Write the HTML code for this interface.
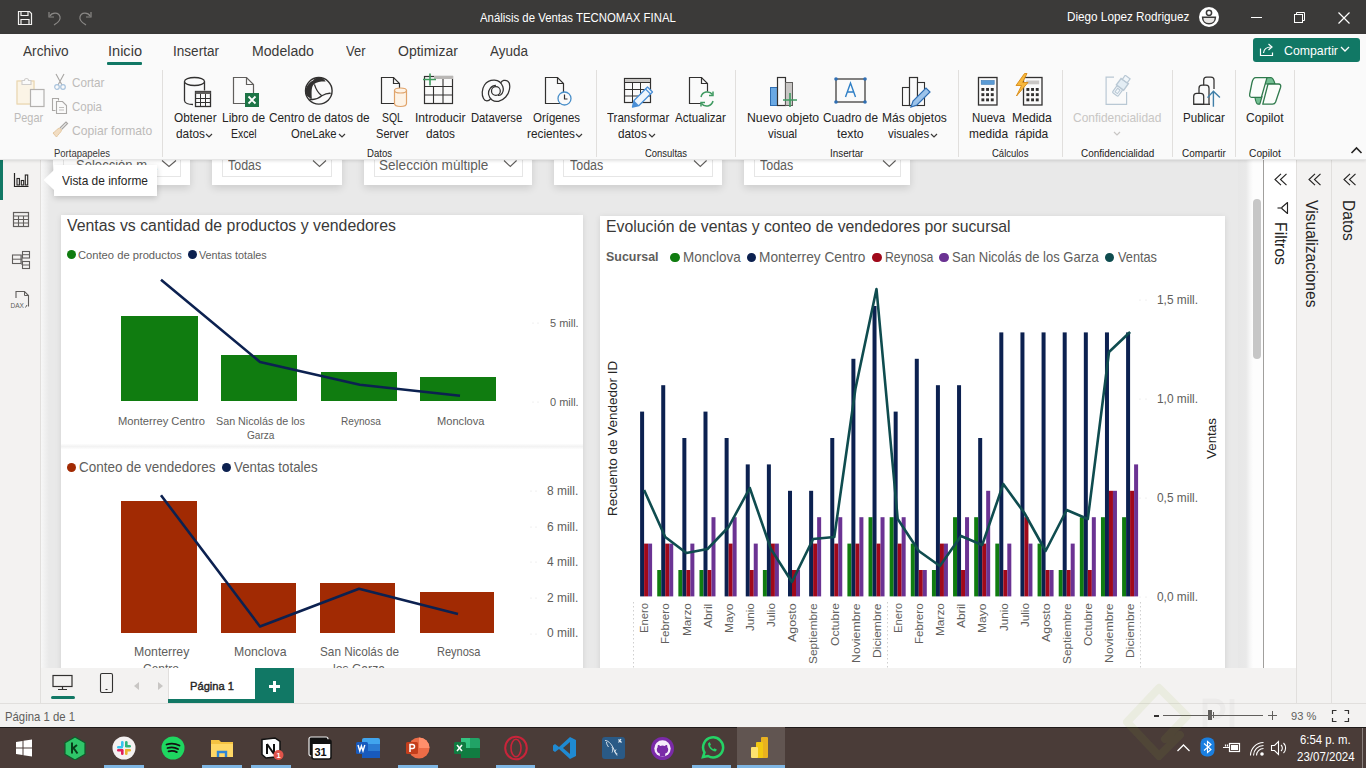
<!DOCTYPE html>
<html><head><meta charset="utf-8"><title>Power BI</title>
<style>
html,body{margin:0;padding:0;width:1366px;height:768px;overflow:hidden;background:#f9f9f9;}
body{position:relative;font-family:"Liberation Sans",sans-serif;}
.t{position:absolute;white-space:nowrap;}
.r{position:absolute;display:block;}
</style></head><body>
<div class="r" style="left:0px;top:0px;width:1366px;height:34px;background:#3b3a39;"></div><svg class="r" style="left:17px;top:10px;" width="16" height="16" viewBox="0 0 16 16"><path d="M1.5 1.5h11l2 2v11h-13z" fill="none" stroke="#f3f2f1" stroke-width="1.2"/><path d="M4 1.5v4h7v-4" fill="none" stroke="#f3f2f1" stroke-width="1.2"/><path d="M4 14.5v-5h8v5" fill="none" stroke="#f3f2f1" stroke-width="1.2"/></svg><svg class="r" style="left:47px;top:10px;" width="16" height="16" viewBox="0 0 16 16"><path d="M3 6 C5 2, 12 2, 13 7 C14 11, 10 13, 7 15" fill="none" stroke="#8a8886" stroke-width="1.2"/><path d="M2 2v5h5" fill="none" stroke="#8a8886" stroke-width="1.2"/></svg><svg class="r" style="left:77px;top:10px;" width="16" height="16" viewBox="0 0 16 16"><path d="M13 6 C11 2, 4 2, 3 7 C2 11, 6 13, 9 15" fill="none" stroke="#8a8886" stroke-width="1.2"/><path d="M14 2v5h-5" fill="none" stroke="#8a8886" stroke-width="1.2"/></svg><div class="t" style="left:480.0px;top:11.5px;font-size:12.07px;line-height:12.07px;color:#ffffff;transform-origin:0 50%;transform:scaleX(0.9434);">Análisis de Ventas TECNOMAX FINAL</div><div class="t" style="left:1066.5px;top:11.3px;font-size:12.43px;line-height:12.43px;color:#ffffff;transform-origin:0 50%;transform:scaleX(0.9434);">Diego Lopez Rodriguez</div><svg class="r" style="left:1198px;top:6px;" width="22" height="22" viewBox="0 0 22 22"><circle cx="11" cy="11" r="10" fill="#ffffff"/><circle cx="11" cy="6.8" r="2.6" fill="none" stroke="#3b3a39" stroke-width="1.5"/><path d="M4.6 11.2H17.4C17.4 15.2 14.6 17.8 11 17.8C7.4 17.8 4.6 15.2 4.6 11.2Z" fill="#e8e6e4" stroke="#3b3a39" stroke-width="1.5"/></svg><div class="r" style="left:1251px;top:17px;width:11px;height:1px;background:#ffffff;"></div><svg class="r" style="left:1293px;top:11px;" width="14" height="14" viewBox="0 0 14 14"><rect x="1.5" y="3.5" width="8" height="8" fill="none" stroke="#fff" stroke-width="1"/><path d="M3.5 3.5v-2h8v8h-2" fill="none" stroke="#fff" stroke-width="1"/></svg><svg class="r" style="left:1337px;top:11px;" width="14" height="14" viewBox="0 0 14 14"><path d="M1.5 1.5l11 11M12.5 1.5l-11 11" stroke="#fff" stroke-width="1.2"/></svg>
<div class="r" style="left:0px;top:160px;width:40px;height:508px;background:#f3f2f1;"></div><div class="r" style="left:40px;top:160px;width:1px;height:508px;background:#e1dfdd;"></div><div class="r" style="left:0px;top:160px;width:3px;height:40px;background:#117865;"></div><svg class="r" style="left:12px;top:171px;" width="18" height="18" viewBox="0 0 18 18"><path d="M2.5 2v13.5h14" fill="none" stroke="#252423" stroke-width="1.2"/><rect x="5" y="7.5" width="2.4" height="6.5" fill="none" stroke="#252423" stroke-width="1.1"/><rect x="9.3" y="9.5" width="2.4" height="4.5" fill="none" stroke="#252423" stroke-width="1.1"/><rect x="13.3" y="4" width="2.4" height="10" fill="none" stroke="#252423" stroke-width="1.1"/></svg><svg class="r" style="left:12px;top:211px;" width="18" height="18" viewBox="0 0 18 18"><rect x="1.5" y="1.5" width="15" height="14" fill="none" stroke="#605e5c" stroke-width="1.2"/><path d="M1.5 5h15M1.5 8.5h15M1.5 12h15M6.5 5v10.5M11.5 5v10.5" stroke="#605e5c" stroke-width="1.1"/></svg><svg class="r" style="left:11px;top:249px;" width="21" height="22" viewBox="0 0 21 22"><rect x="1.5" y="6" width="8.5" height="8.5" fill="none" stroke="#605e5c" stroke-width="1.1"/><path d="M1.5 10.2h8.5" stroke="#605e5c" stroke-width="1"/><rect x="11.5" y="2.5" width="7" height="6.5" fill="none" stroke="#605e5c" stroke-width="1.1"/><path d="M11.5 5.7h7" stroke="#605e5c" stroke-width="1"/><rect x="11.5" y="12.5" width="7" height="7" fill="none" stroke="#605e5c" stroke-width="1.1"/><path d="M11.5 16h7M10 10.2h1M11 5.7v10.3" stroke="#605e5c" stroke-width="1"/></svg><svg class="r" style="left:9px;top:290px;" width="22" height="20" viewBox="0 0 22 20"><path d="M7 8v-6.5h8.5l4 4v11" fill="none" stroke="#605e5c" stroke-width="1.1"/><path d="M15.5 1.5v4h4" fill="none" stroke="#605e5c" stroke-width="1"/><text x="1.5" y="17.5" font-family="Liberation Sans" font-size="6.5" fill="#605e5c">DAX</text><path d="M16.5 17.5l1.5-2.5" stroke="#605e5c" stroke-width="1"/></svg>
<div class="r" style="left:41px;top:160px;width:1222px;height:508px;background:#e9e9e9;"></div><div class="r" style="left:41px;top:160px;width:8px;height:508px;background:linear-gradient(to right,#f7f7f7,#e9e9e9);"></div><div class="r" style="left:1238px;top:160px;width:25px;height:508px;background:linear-gradient(to right,#e7e7e7 0px,#e9e9e9 8px,#f6f6f6 12px,#fdfdfd 15px,#fdfdfd);"></div><div class="r" style="left:1253px;top:199px;width:8px;height:160px;background:#c6c6c6;border-radius:4px"></div>
<div class="r" style="left:61px;top:215px;width:522px;height:470px;background:#ffffff;box-shadow:0 1px 6px rgba(0,0,0,0.10)"></div><div class="t" style="left:66.9px;top:218.4px;font-size:16.82px;line-height:16.82px;color:#3a3938;transform-origin:0 50%;transform:scaleX(0.9434);">Ventas vs cantidad de productos y vendedores</div><div class="r" style="left:66.5px;top:250.20000000000002px;width:9.2px;height:9.2px;background:#107c10;border-radius:50%"></div><div class="t" style="left:77.9px;top:249.0px;font-size:11.70px;line-height:11.70px;color:#605e5c;transform-origin:0 50%;transform:scaleX(0.9566);">Conteo de productos</div><div class="r" style="left:187.70000000000002px;top:250.20000000000002px;width:9.2px;height:9.2px;background:#0c2150;border-radius:50%"></div><div class="t" style="left:199.2px;top:249.0px;font-size:11.70px;line-height:11.70px;color:#605e5c;transform-origin:0 50%;transform:scaleX(0.9225);">Ventas totales</div><div class="r" style="left:121px;top:316px;width:77px;height:85px;background:#107c10;"></div><div class="r" style="left:221px;top:355px;width:76px;height:46px;background:#107c10;"></div><div class="r" style="left:321px;top:372px;width:76px;height:29px;background:#107c10;"></div><div class="r" style="left:420px;top:377px;width:76px;height:24px;background:#107c10;"></div><svg class="r" style="left:61px;top:215px;" width="522" height="450" viewBox="0 0 522 450"><polyline points="100.0,64.8 199.0,147.0 298.8,169.7 399.0,180.8" fill="none" stroke="#0c2150" stroke-width="2.6" stroke-linejoin="round"/></svg><div class="t" style="left:549.6px;top:317.3px;font-size:11.70px;line-height:11.70px;color:#605e5c;transform-origin:0 50%;transform:scaleX(0.9394);">5 mill.</div><div class="t" style="left:549.6px;top:396.1px;font-size:11.70px;line-height:11.70px;color:#605e5c;transform-origin:0 50%;transform:scaleX(0.9394);">0 mill.</div><svg class="r" style="left:532px;top:322.2px;" width="12" height="2" viewBox="0 0 12 2"><circle cx="1" cy="1" r="0.6" fill="#ddd"/><circle cx="6" cy="1" r="0.6" fill="#ddd"/></svg><svg class="r" style="left:532px;top:401px;" width="12" height="2" viewBox="0 0 12 2"><circle cx="1" cy="1" r="0.6" fill="#ddd"/><circle cx="6" cy="1" r="0.6" fill="#ddd"/></svg><div class="t" style="left:117.9px;top:414.6px;font-size:11.60px;line-height:11.60px;color:#605e5c;transform-origin:0 50%;transform:scaleX(0.9629);">Monterrey Centro</div><div class="t" style="left:216.3px;top:414.6px;font-size:11.60px;line-height:11.60px;color:#605e5c;transform-origin:0 50%;transform:scaleX(0.9264);">San Nicolás de los</div><div class="t" style="left:247.0px;top:429.0px;font-size:11.60px;line-height:11.60px;color:#605e5c;transform-origin:0 50%;transform:scaleX(0.8706);">Garza</div><div class="t" style="left:340.5px;top:414.6px;font-size:11.60px;line-height:11.60px;color:#605e5c;transform-origin:0 50%;transform:scaleX(0.8694);">Reynosa</div><div class="t" style="left:436.5px;top:414.6px;font-size:11.60px;line-height:11.60px;color:#605e5c;transform-origin:0 50%;transform:scaleX(0.9568);">Monclova</div><div class="r" style="left:61px;top:444px;width:522px;height:5px;background:linear-gradient(to bottom,#fcfcfc,#f3f3f3 50%,#fcfcfc);"></div><div class="r" style="left:67.0px;top:462.9px;width:9.2px;height:9.2px;background:#a12a03;border-radius:50%"></div><div class="t" style="left:79.0px;top:460.4px;font-size:14.20px;line-height:14.20px;color:#605e5c;transform-origin:0 50%;transform:scaleX(0.9501);">Conteo de vendedores</div><div class="r" style="left:221.9px;top:462.9px;width:9.2px;height:9.2px;background:#0c2150;border-radius:50%"></div><div class="t" style="left:234.0px;top:460.4px;font-size:14.20px;line-height:14.20px;color:#605e5c;transform-origin:0 50%;transform:scaleX(0.9372);">Ventas totales</div><div class="r" style="left:121px;top:501px;width:76px;height:132px;background:#a12a03;"></div><div class="r" style="left:221px;top:583px;width:75px;height:50px;background:#a12a03;"></div><div class="r" style="left:320px;top:583px;width:75px;height:50px;background:#a12a03;"></div><div class="r" style="left:420px;top:592px;width:74px;height:41px;background:#a12a03;"></div><svg class="r" style="left:61px;top:215px;" width="522" height="450" viewBox="0 0 522 450"><polyline points="100.0,280.3 199.0,411.5 298.0,373.8 397.0,399.0" fill="none" stroke="#0c2150" stroke-width="2.6" stroke-linejoin="round"/></svg><div class="t" style="left:547.0px;top:484.8px;font-size:12.70px;line-height:12.70px;color:#605e5c;transform-origin:0 50%;transform:scaleX(0.9438);">8 mill.</div><svg class="r" style="left:530px;top:490.2px;" width="12" height="2" viewBox="0 0 12 2"><circle cx="1" cy="1" r="0.6" fill="#ddd"/><circle cx="6" cy="1" r="0.6" fill="#ddd"/></svg><div class="t" style="left:547.0px;top:520.6px;font-size:12.70px;line-height:12.70px;color:#605e5c;transform-origin:0 50%;transform:scaleX(0.9438);">6 mill.</div><svg class="r" style="left:530px;top:526px;" width="12" height="2" viewBox="0 0 12 2"><circle cx="1" cy="1" r="0.6" fill="#ddd"/><circle cx="6" cy="1" r="0.6" fill="#ddd"/></svg><div class="t" style="left:547.0px;top:555.9px;font-size:12.70px;line-height:12.70px;color:#605e5c;transform-origin:0 50%;transform:scaleX(0.9438);">4 mill.</div><svg class="r" style="left:530px;top:561.2px;" width="12" height="2" viewBox="0 0 12 2"><circle cx="1" cy="1" r="0.6" fill="#ddd"/><circle cx="6" cy="1" r="0.6" fill="#ddd"/></svg><div class="t" style="left:547.0px;top:591.5px;font-size:12.70px;line-height:12.70px;color:#605e5c;transform-origin:0 50%;transform:scaleX(0.9438);">2 mill.</div><svg class="r" style="left:530px;top:596.9px;" width="12" height="2" viewBox="0 0 12 2"><circle cx="1" cy="1" r="0.6" fill="#ddd"/><circle cx="6" cy="1" r="0.6" fill="#ddd"/></svg><div class="t" style="left:547.0px;top:627.1px;font-size:12.70px;line-height:12.70px;color:#605e5c;transform-origin:0 50%;transform:scaleX(0.9438);">0 mill.</div><svg class="r" style="left:530px;top:632.5px;" width="12" height="2" viewBox="0 0 12 2"><circle cx="1" cy="1" r="0.6" fill="#ddd"/><circle cx="6" cy="1" r="0.6" fill="#ddd"/></svg><div class="t" style="left:133.5px;top:645.9px;font-size:12.90px;line-height:12.90px;color:#605e5c;transform-origin:0 50%;transform:scaleX(0.9524);">Monterrey</div><div class="t" style="left:143.0px;top:663.0px;font-size:12.90px;line-height:12.90px;color:#605e5c;transform-origin:0 50%;transform:scaleX(0.9298);">Centro</div><div class="t" style="left:233.5px;top:645.9px;font-size:12.90px;line-height:12.90px;color:#605e5c;transform-origin:0 50%;transform:scaleX(0.9510);">Monclova</div><div class="t" style="left:319.6px;top:645.9px;font-size:12.90px;line-height:12.90px;color:#605e5c;transform-origin:0 50%;transform:scaleX(0.9128);">San Nicolás de</div><div class="t" style="left:333.0px;top:663.0px;font-size:12.90px;line-height:12.90px;color:#605e5c;transform-origin:0 50%;transform:scaleX(0.9420);">los Garza</div><div class="t" style="left:436.5px;top:645.9px;font-size:12.90px;line-height:12.90px;color:#605e5c;transform-origin:0 50%;transform:scaleX(0.8544);">Reynosa</div>
<div class="r" style="left:600px;top:216px;width:625px;height:470px;background:#ffffff;box-shadow:0 1px 6px rgba(0,0,0,0.10)"></div><div class="t" style="left:605.6px;top:219.4px;font-size:16.74px;line-height:16.74px;color:#3a3938;transform-origin:0 50%;transform:scaleX(0.9434);">Evolución de ventas y conteo de vendedores por sucursal</div><div class="t" style="left:605.6px;top:250.4px;font-size:13.18px;line-height:13.18px;color:#605e5c;font-weight:bold;transform-origin:0 50%;transform:scaleX(0.9434);">Sucursal</div><div class="r" style="left:670.4px;top:252.6px;width:9.2px;height:9.2px;background:#107c10;border-radius:50%"></div><div class="t" style="left:682.8px;top:250.1px;font-size:14.10px;line-height:14.10px;color:#605e5c;transform-origin:0 50%;transform:scaleX(0.9562);">Monclova</div><div class="r" style="left:746.9px;top:252.6px;width:9.2px;height:9.2px;background:#0c2150;border-radius:50%"></div><div class="t" style="left:759.3px;top:250.1px;font-size:14.10px;line-height:14.10px;color:#605e5c;transform-origin:0 50%;transform:scaleX(0.9708);">Monterrey Centro</div><div class="r" style="left:872.4px;top:252.6px;width:9.2px;height:9.2px;background:#a0091a;border-radius:50%"></div><div class="t" style="left:885.0px;top:250.1px;font-size:14.10px;line-height:14.10px;color:#605e5c;transform-origin:0 50%;transform:scaleX(0.8698);">Reynosa</div><div class="r" style="left:939.4px;top:252.6px;width:9.2px;height:9.2px;background:#6b3393;border-radius:50%"></div><div class="t" style="left:952.4px;top:250.1px;font-size:14.10px;line-height:14.10px;color:#605e5c;transform-origin:0 50%;transform:scaleX(0.9228);">San Nicolás de los Garza</div><div class="r" style="left:1105.3000000000002px;top:252.6px;width:9.2px;height:9.2px;background:#0f4c4f;border-radius:50%"></div><div class="t" style="left:1118.0px;top:250.1px;font-size:14.10px;line-height:14.10px;color:#605e5c;transform-origin:0 50%;transform:scaleX(0.9045);">Ventas</div><svg class="r" style="left:600px;top:216px;" width="625" height="470" viewBox="0 0 625 470"><rect x="40.10" y="195.60" width="4" height="184.80" fill="#0c2150"/><rect x="44.10" y="327.60" width="4" height="52.80" fill="#a0091a"/><rect x="48.10" y="327.60" width="4" height="52.80" fill="#6b3393"/><rect x="57.23" y="354.00" width="4" height="26.40" fill="#107c10"/><rect x="61.23" y="169.20" width="4" height="211.20" fill="#0c2150"/><rect x="65.23" y="327.60" width="4" height="52.80" fill="#a0091a"/><rect x="69.23" y="327.60" width="4" height="52.80" fill="#6b3393"/><rect x="78.36" y="354.00" width="4" height="26.40" fill="#107c10"/><rect x="82.36" y="222.00" width="4" height="158.40" fill="#0c2150"/><rect x="86.36" y="354.00" width="4" height="26.40" fill="#a0091a"/><rect x="90.36" y="327.60" width="4" height="52.80" fill="#6b3393"/><rect x="99.49" y="354.00" width="4" height="26.40" fill="#107c10"/><rect x="103.49" y="195.60" width="4" height="184.80" fill="#0c2150"/><rect x="107.49" y="354.00" width="4" height="26.40" fill="#a0091a"/><rect x="111.49" y="301.20" width="4" height="79.20" fill="#6b3393"/><rect x="124.62" y="222.00" width="4" height="158.40" fill="#0c2150"/><rect x="128.62" y="327.60" width="4" height="52.80" fill="#a0091a"/><rect x="132.62" y="301.20" width="4" height="79.20" fill="#6b3393"/><rect x="145.75" y="248.40" width="4" height="132.00" fill="#0c2150"/><rect x="149.75" y="354.00" width="4" height="26.40" fill="#a0091a"/><rect x="153.75" y="327.60" width="4" height="52.80" fill="#6b3393"/><rect x="162.88" y="354.00" width="4" height="26.40" fill="#107c10"/><rect x="166.88" y="248.40" width="4" height="132.00" fill="#0c2150"/><rect x="170.88" y="327.60" width="4" height="52.80" fill="#a0091a"/><rect x="174.88" y="327.60" width="4" height="52.80" fill="#6b3393"/><rect x="188.01" y="274.80" width="4" height="105.60" fill="#0c2150"/><rect x="192.01" y="354.00" width="4" height="26.40" fill="#a0091a"/><rect x="196.01" y="354.00" width="4" height="26.40" fill="#6b3393"/><rect x="209.14" y="274.80" width="4" height="105.60" fill="#0c2150"/><rect x="213.14" y="327.60" width="4" height="52.80" fill="#a0091a"/><rect x="217.14" y="301.20" width="4" height="79.20" fill="#6b3393"/><rect x="230.27" y="222.00" width="4" height="158.40" fill="#0c2150"/><rect x="234.27" y="327.60" width="4" height="52.80" fill="#a0091a"/><rect x="238.27" y="301.20" width="4" height="79.20" fill="#6b3393"/><rect x="247.40" y="327.60" width="4" height="52.80" fill="#107c10"/><rect x="251.40" y="142.80" width="4" height="237.60" fill="#0c2150"/><rect x="255.40" y="327.60" width="4" height="52.80" fill="#a0091a"/><rect x="259.40" y="301.20" width="4" height="79.20" fill="#6b3393"/><rect x="268.53" y="301.20" width="4" height="79.20" fill="#107c10"/><rect x="272.53" y="90.00" width="4" height="290.40" fill="#0c2150"/><rect x="276.53" y="327.60" width="4" height="52.80" fill="#a0091a"/><rect x="280.53" y="301.20" width="4" height="79.20" fill="#6b3393"/><rect x="289.66" y="301.20" width="4" height="79.20" fill="#107c10"/><rect x="293.66" y="195.60" width="4" height="184.80" fill="#0c2150"/><rect x="297.66" y="327.60" width="4" height="52.80" fill="#a0091a"/><rect x="301.66" y="301.20" width="4" height="79.20" fill="#6b3393"/><rect x="310.79" y="327.60" width="4" height="52.80" fill="#107c10"/><rect x="314.79" y="142.80" width="4" height="237.60" fill="#0c2150"/><rect x="318.79" y="354.00" width="4" height="26.40" fill="#a0091a"/><rect x="322.79" y="354.00" width="4" height="26.40" fill="#6b3393"/><rect x="331.92" y="354.00" width="4" height="26.40" fill="#107c10"/><rect x="335.92" y="169.20" width="4" height="211.20" fill="#0c2150"/><rect x="339.92" y="327.60" width="4" height="52.80" fill="#a0091a"/><rect x="343.92" y="327.60" width="4" height="52.80" fill="#6b3393"/><rect x="353.05" y="301.20" width="4" height="79.20" fill="#107c10"/><rect x="357.05" y="169.20" width="4" height="211.20" fill="#0c2150"/><rect x="361.05" y="354.00" width="4" height="26.40" fill="#a0091a"/><rect x="365.05" y="301.20" width="4" height="79.20" fill="#6b3393"/><rect x="374.18" y="301.20" width="4" height="79.20" fill="#107c10"/><rect x="378.18" y="222.00" width="4" height="158.40" fill="#0c2150"/><rect x="382.18" y="327.60" width="4" height="52.80" fill="#a0091a"/><rect x="386.18" y="274.80" width="4" height="105.60" fill="#6b3393"/><rect x="395.31" y="327.60" width="4" height="52.80" fill="#107c10"/><rect x="399.31" y="116.40" width="4" height="264.00" fill="#0c2150"/><rect x="403.31" y="354.00" width="4" height="26.40" fill="#a0091a"/><rect x="407.31" y="327.60" width="4" height="52.80" fill="#6b3393"/><rect x="420.44" y="116.40" width="4" height="264.00" fill="#0c2150"/><rect x="424.44" y="301.20" width="4" height="79.20" fill="#a0091a"/><rect x="428.44" y="327.60" width="4" height="52.80" fill="#6b3393"/><rect x="437.57" y="327.60" width="4" height="52.80" fill="#107c10"/><rect x="441.57" y="116.40" width="4" height="264.00" fill="#0c2150"/><rect x="445.57" y="354.00" width="4" height="26.40" fill="#a0091a"/><rect x="449.57" y="354.00" width="4" height="26.40" fill="#6b3393"/><rect x="458.70" y="354.00" width="4" height="26.40" fill="#107c10"/><rect x="462.70" y="116.40" width="4" height="264.00" fill="#0c2150"/><rect x="466.70" y="354.00" width="4" height="26.40" fill="#a0091a"/><rect x="470.70" y="327.60" width="4" height="52.80" fill="#6b3393"/><rect x="479.83" y="301.20" width="4" height="79.20" fill="#107c10"/><rect x="483.83" y="116.40" width="4" height="264.00" fill="#0c2150"/><rect x="487.83" y="354.00" width="4" height="26.40" fill="#a0091a"/><rect x="491.83" y="301.20" width="4" height="79.20" fill="#6b3393"/><rect x="500.96" y="301.20" width="4" height="79.20" fill="#107c10"/><rect x="504.96" y="116.40" width="4" height="264.00" fill="#0c2150"/><rect x="508.96" y="274.80" width="4" height="105.60" fill="#a0091a"/><rect x="512.96" y="274.80" width="4" height="105.60" fill="#6b3393"/><rect x="522.09" y="301.20" width="4" height="79.20" fill="#107c10"/><rect x="526.09" y="116.40" width="4" height="264.00" fill="#0c2150"/><rect x="530.09" y="274.80" width="4" height="105.60" fill="#a0091a"/><rect x="534.09" y="248.40" width="4" height="132.00" fill="#6b3393"/><polyline points="44.1,274.0 65.2,321.0 86.4,337.0 107.5,333.0 128.6,311.0 149.8,272.0 170.9,333.0 192.0,366.0 213.1,323.0 234.3,321.0 255.4,173.0 276.5,73.0 297.7,303.0 318.8,335.0 339.9,350.0 361.0,320.0 382.2,329.0 403.3,268.0 424.4,297.0 445.6,335.0 466.7,294.0 487.8,303.0 509.0,136.0 530.1,116.0" fill="none" stroke="#0f4c4f" stroke-width="2.6" stroke-linejoin="round"/><line x1="33.5" y1="386" x2="33.5" y2="470" stroke="#cfcfcf" stroke-width="1" stroke-dasharray="1.5,2.5"/><line x1="287.5" y1="386" x2="287.5" y2="470" stroke="#cfcfcf" stroke-width="1" stroke-dasharray="1.5,2.5"/><line x1="540.5" y1="386" x2="540.5" y2="470" stroke="#cfcfcf" stroke-width="1" stroke-dasharray="1.5,2.5"/></svg><div class="t" style="left:638.3px;top:633.4px;font-size:11.60px;line-height:11.60px;color:#605e5c;transform-origin:0 0;transform:rotate(-90deg) scaleX(0.9725)">Enero</div><div class="t" style="left:659.4px;top:643.9px;font-size:11.60px;line-height:11.60px;color:#605e5c;transform-origin:0 0;transform:rotate(-90deg)">Febrero</div><div class="t" style="left:680.6px;top:636.2px;font-size:11.60px;line-height:11.60px;color:#605e5c;transform-origin:0 0;transform:rotate(-90deg) scaleX(1.0209)">Marzo</div><div class="t" style="left:701.7px;top:627.6px;font-size:11.60px;line-height:11.60px;color:#605e5c;transform-origin:0 0;transform:rotate(-90deg) scaleX(1.0472)">Abril</div><div class="t" style="left:722.8px;top:632.8px;font-size:11.60px;line-height:11.60px;color:#605e5c;transform-origin:0 0;transform:rotate(-90deg) scaleX(1.0401)">Mayo</div><div class="t" style="left:744.0px;top:631.1px;font-size:11.60px;line-height:11.60px;color:#605e5c;transform-origin:0 0;transform:rotate(-90deg)">Junio</div><div class="t" style="left:765.1px;top:627.1px;font-size:11.60px;line-height:11.60px;color:#605e5c;transform-origin:0 0;transform:rotate(-90deg)">Julio</div><div class="t" style="left:786.2px;top:641.9px;font-size:11.60px;line-height:11.60px;color:#605e5c;transform-origin:0 0;transform:rotate(-90deg) scaleX(1.0689)">Agosto</div><div class="t" style="left:807.3px;top:664.0px;font-size:11.60px;line-height:11.60px;color:#605e5c;transform-origin:0 0;transform:rotate(-90deg) scaleX(1.0233)">Septiembre</div><div class="t" style="left:828.5px;top:646.2px;font-size:11.60px;line-height:11.60px;color:#605e5c;transform-origin:0 0;transform:rotate(-90deg) scaleX(1.0398)">Octubre</div><div class="t" style="left:849.6px;top:662.8px;font-size:11.60px;line-height:11.60px;color:#605e5c;transform-origin:0 0;transform:rotate(-90deg) scaleX(1.0609)">Noviembre</div><div class="t" style="left:870.7px;top:657.7px;font-size:11.60px;line-height:11.60px;color:#605e5c;transform-origin:0 0;transform:rotate(-90deg) scaleX(1.0420)">Diciembre</div><div class="t" style="left:891.9px;top:633.4px;font-size:11.60px;line-height:11.60px;color:#605e5c;transform-origin:0 0;transform:rotate(-90deg) scaleX(0.9725)">Enero</div><div class="t" style="left:913.0px;top:643.9px;font-size:11.60px;line-height:11.60px;color:#605e5c;transform-origin:0 0;transform:rotate(-90deg)">Febrero</div><div class="t" style="left:934.1px;top:636.2px;font-size:11.60px;line-height:11.60px;color:#605e5c;transform-origin:0 0;transform:rotate(-90deg) scaleX(1.0209)">Marzo</div><div class="t" style="left:955.2px;top:627.6px;font-size:11.60px;line-height:11.60px;color:#605e5c;transform-origin:0 0;transform:rotate(-90deg) scaleX(1.0472)">Abril</div><div class="t" style="left:976.4px;top:632.8px;font-size:11.60px;line-height:11.60px;color:#605e5c;transform-origin:0 0;transform:rotate(-90deg) scaleX(1.0401)">Mayo</div><div class="t" style="left:997.5px;top:631.1px;font-size:11.60px;line-height:11.60px;color:#605e5c;transform-origin:0 0;transform:rotate(-90deg)">Junio</div><div class="t" style="left:1018.6px;top:627.1px;font-size:11.60px;line-height:11.60px;color:#605e5c;transform-origin:0 0;transform:rotate(-90deg)">Julio</div><div class="t" style="left:1039.8px;top:641.9px;font-size:11.60px;line-height:11.60px;color:#605e5c;transform-origin:0 0;transform:rotate(-90deg) scaleX(1.0689)">Agosto</div><div class="t" style="left:1060.9px;top:664.0px;font-size:11.60px;line-height:11.60px;color:#605e5c;transform-origin:0 0;transform:rotate(-90deg) scaleX(1.0233)">Septiembre</div><div class="t" style="left:1082.0px;top:646.2px;font-size:11.60px;line-height:11.60px;color:#605e5c;transform-origin:0 0;transform:rotate(-90deg) scaleX(1.0398)">Octubre</div><div class="t" style="left:1103.2px;top:662.8px;font-size:11.60px;line-height:11.60px;color:#605e5c;transform-origin:0 0;transform:rotate(-90deg) scaleX(1.0609)">Noviembre</div><div class="t" style="left:1124.3px;top:657.7px;font-size:11.60px;line-height:11.60px;color:#605e5c;transform-origin:0 0;transform:rotate(-90deg) scaleX(1.0420)">Diciembre</div><div class="t" style="left:1157.0px;top:293.5px;font-size:12.60px;line-height:12.60px;color:#605e5c;transform-origin:0 50%;transform:scaleX(0.9445);">1,5 mill.</div><svg class="r" style="left:1138px;top:298.8px;" width="14" height="2" viewBox="0 0 14 2"><circle cx="2" cy="1" r="0.6" fill="#ddd"/><circle cx="8" cy="1" r="0.6" fill="#ddd"/></svg><div class="t" style="left:1157.0px;top:392.7px;font-size:12.60px;line-height:12.60px;color:#605e5c;transform-origin:0 50%;transform:scaleX(0.9445);">1,0 mill.</div><svg class="r" style="left:1138px;top:398px;" width="14" height="2" viewBox="0 0 14 2"><circle cx="2" cy="1" r="0.6" fill="#ddd"/><circle cx="8" cy="1" r="0.6" fill="#ddd"/></svg><div class="t" style="left:1157.0px;top:491.5px;font-size:12.60px;line-height:12.60px;color:#605e5c;transform-origin:0 50%;transform:scaleX(0.9445);">0,5 mill.</div><svg class="r" style="left:1138px;top:496.8px;" width="14" height="2" viewBox="0 0 14 2"><circle cx="2" cy="1" r="0.6" fill="#ddd"/><circle cx="8" cy="1" r="0.6" fill="#ddd"/></svg><div class="t" style="left:1157.0px;top:590.7px;font-size:12.60px;line-height:12.60px;color:#605e5c;transform-origin:0 50%;transform:scaleX(0.9445);">0,0 mill.</div><svg class="r" style="left:1138px;top:596px;" width="14" height="2" viewBox="0 0 14 2"><circle cx="2" cy="1" r="0.6" fill="#ddd"/><circle cx="8" cy="1" r="0.6" fill="#ddd"/></svg><div class="t" style="left:605.9px;top:515.8px;font-size:13.51px;line-height:13.51px;color:#252423;transform-origin:0 0;transform:rotate(-90deg)">Recuento de Vendedor ID</div><div class="t" style="left:1205.0px;top:458.6px;font-size:13.41px;line-height:13.41px;color:#252423;transform-origin:0 0;transform:rotate(-90deg)">Ventas</div>
<div class="r" style="left:53px;top:150px;width:137px;height:35px;background:#ffffff;box-shadow:0 3px 8px rgba(0,0,0,0.13)"></div><div class="r" style="left:212px;top:150px;width:129.60000000000002px;height:35px;background:#ffffff;box-shadow:0 3px 8px rgba(0,0,0,0.13)"></div><div class="r" style="left:364.3px;top:150px;width:167.49999999999994px;height:35px;background:#ffffff;box-shadow:0 3px 8px rgba(0,0,0,0.13)"></div><div class="r" style="left:553.7px;top:150px;width:168.29999999999995px;height:35px;background:#ffffff;box-shadow:0 3px 8px rgba(0,0,0,0.13)"></div><div class="r" style="left:744.3px;top:150px;width:166.20000000000005px;height:35px;background:#ffffff;box-shadow:0 3px 8px rgba(0,0,0,0.13)"></div><div class="r" style="left:63px;top:150px;width:117.5px;height:27px;background:#ffffff;border:1px solid #e6e6e6;box-sizing:border-box"></div><div class="t" style="left:76.0px;top:158.6px;font-size:13.80px;line-height:13.80px;color:#605e5c;transform-origin:0 50%;transform:scaleX(0.9462);">Selección m...</div><svg class="r" style="left:161px;top:159px;" width="16" height="9" viewBox="0 0 16 9"><polyline points="1,1.5 8.0,7.5 15,1.5" fill="none" stroke="#605e5c" stroke-width="1.1"/></svg><div class="r" style="left:221.5px;top:150px;width:110.10000000000002px;height:27px;background:#ffffff;border:1px solid #e6e6e6;box-sizing:border-box"></div><div class="t" style="left:228.0px;top:158.6px;font-size:13.80px;line-height:13.80px;color:#605e5c;transform-origin:0 50%;transform:scaleX(0.9043);">Todas</div><svg class="r" style="left:312px;top:159px;" width="15" height="9" viewBox="0 0 15 9"><polyline points="1,1.5 7.5,7.5 14,1.5" fill="none" stroke="#605e5c" stroke-width="1.1"/></svg><div class="r" style="left:374px;top:150px;width:148.5px;height:27px;background:#ffffff;border:1px solid #e6e6e6;box-sizing:border-box"></div><div class="t" style="left:379.4px;top:158.6px;font-size:13.80px;line-height:13.80px;color:#605e5c;transform-origin:0 50%;transform:scaleX(0.9837);">Selección múltiple</div><svg class="r" style="left:503.4px;top:159px;" width="14.600000000000023" height="9" viewBox="0 0 14.600000000000023 9"><polyline points="1,1.5 7.300000000000011,7.5 13.600000000000023,1.5" fill="none" stroke="#605e5c" stroke-width="1.1"/></svg><div class="r" style="left:563.3px;top:150px;width:149.4000000000001px;height:27px;background:#ffffff;border:1px solid #e6e6e6;box-sizing:border-box"></div><div class="t" style="left:569.6px;top:158.6px;font-size:13.80px;line-height:13.80px;color:#605e5c;transform-origin:0 50%;transform:scaleX(0.9043);">Todas</div><svg class="r" style="left:692.8px;top:159px;" width="14.600000000000023" height="9" viewBox="0 0 14.600000000000023 9"><polyline points="1,1.5 7.300000000000011,7.5 13.600000000000023,1.5" fill="none" stroke="#605e5c" stroke-width="1.1"/></svg><div class="r" style="left:753.6px;top:150px;width:147.69999999999993px;height:27px;background:#ffffff;border:1px solid #e6e6e6;box-sizing:border-box"></div><div class="t" style="left:759.9px;top:158.6px;font-size:13.80px;line-height:13.80px;color:#605e5c;transform-origin:0 50%;transform:scaleX(0.9043);">Todas</div><svg class="r" style="left:882.2px;top:159px;" width="14.599999999999909" height="9" viewBox="0 0 14.599999999999909 9"><polyline points="1,1.5 7.2999999999999545,7.5 13.599999999999909,1.5" fill="none" stroke="#605e5c" stroke-width="1.1"/></svg>
<div class="r" style="left:53.5px;top:164.5px;width:103px;height:31px;background:#ffffff;box-shadow:0 2px 6px rgba(0,0,0,0.18)"></div><svg class="r" style="left:42px;top:170px;" width="13" height="20" viewBox="0 0 13 20"><path d="M12 0 L1.5 10 L12 20 Z" fill="#ffffff"/></svg><div class="t" style="left:62.0px;top:174.9px;font-size:12.60px;line-height:12.60px;color:#252423;transform-origin:0 50%;transform:scaleX(0.9470);">Vista de informe</div>
<div class="r" style="left:1263px;top:160px;width:1px;height:508px;background:#a19f9d;"></div><div class="r" style="left:1264px;top:160px;width:32px;height:508px;background:#ffffff;"></div><div class="r" style="left:1296px;top:160px;width:1px;height:508px;background:#e1dfdd;"></div><div class="r" style="left:1297px;top:160px;width:35px;height:508px;background:#f3f2f1;"></div><div class="r" style="left:1331px;top:160px;width:1px;height:508px;background:#e1dfdd;"></div><div class="r" style="left:1332px;top:160px;width:34px;height:508px;background:#f3f2f1;"></div><svg class="r" style="left:1273.5px;top:172.5px;" width="14" height="13" viewBox="0 0 14 13"><polyline points="7,0.8 1,6.5 7,12.2" fill="none" stroke="#252423" stroke-width="1.15"/><polyline points="12.5,0.8 6.5,6.5 12.5,12.2" fill="none" stroke="#252423" stroke-width="1.15"/></svg><svg class="r" style="left:1308px;top:172.5px;" width="14" height="13" viewBox="0 0 14 13"><polyline points="7,0.8 1,6.5 7,12.2" fill="none" stroke="#252423" stroke-width="1.15"/><polyline points="12.5,0.8 6.5,6.5 12.5,12.2" fill="none" stroke="#252423" stroke-width="1.15"/></svg><svg class="r" style="left:1342.5px;top:172.5px;" width="14" height="13" viewBox="0 0 14 13"><polyline points="7,0.8 1,6.5 7,12.2" fill="none" stroke="#252423" stroke-width="1.15"/><polyline points="12.5,0.8 6.5,6.5 12.5,12.2" fill="none" stroke="#252423" stroke-width="1.15"/></svg><svg class="r" style="left:1276px;top:201px;" width="13" height="14" viewBox="0 0 13 14"><path d="M11.5 1.5V12.5L6 7.8V6.2Z" fill="none" stroke="#252423" stroke-width="1.15" stroke-linejoin="round"/><path d="M6 7H1.5" stroke="#252423" stroke-width="1.15"/></svg><div class="t" style="left:1280.0px;top:222.0px;font-size:15.80px;line-height:15.80px;color:#252423;transform-origin:0 0;transform:rotate(90deg) translate(0,-7.90px)">Filtros</div><div class="t" style="left:1311.4px;top:200.0px;font-size:15.65px;line-height:15.65px;color:#252423;transform-origin:0 0;transform:rotate(90deg) translate(0,-7.83px)">Visualizaciones</div><div class="t" style="left:1347.5px;top:200.0px;font-size:15.58px;line-height:15.58px;color:#252423;transform-origin:0 0;transform:rotate(90deg) translate(0,-7.79px)">Datos</div>
<div class="r" style="left:0;top:34px;width:1366px;height:126px;background:#fafafa;box-shadow:0 1px 3px rgba(0,0,0,0.12)"></div>
<div class="t" style="left:13.7px;top:112.0px;font-size:12.40px;line-height:12.40px;color:#bdbbb9;transform-origin:0 50%;transform:scaleX(0.8795);">Pegar</div><div class="t" style="left:72.0px;top:76.8px;font-size:12.40px;line-height:12.40px;color:#bdbbb9;transform-origin:0 50%;transform:scaleX(0.9434);">Cortar</div><div class="t" style="left:72.0px;top:100.9px;font-size:12.17px;line-height:12.17px;color:#bdbbb9;transform-origin:0 50%;transform:scaleX(0.9434);">Copia</div><div class="t" style="left:72.0px;top:124.8px;font-size:12.87px;line-height:12.87px;color:#bdbbb9;transform-origin:0 50%;transform:scaleX(0.9434);">Copiar formato</div><div class="t" style="left:53.5px;top:149.3px;font-size:10.07px;line-height:10.07px;color:#3a3938;transform-origin:0 50%;transform:scaleX(0.9434);">Portapapeles</div><div class="t" style="left:174.0px;top:112.0px;font-size:12.40px;line-height:12.40px;color:#252423;transform-origin:0 50%;transform:scaleX(0.9509);">Obtener</div><div class="t" style="left:175.5px;top:128.0px;font-size:12.40px;line-height:12.40px;color:#252423;transform-origin:0 50%;transform:scaleX(0.9561);">datos</div><svg class="r" style="left:205.0px;top:132.7px;" width="8" height="5.0" viewBox="0 0 8 5.0"><polyline points="1,1 4.0,4.0 7,1" fill="none" stroke="#3a3938" stroke-width="1.2"/></svg><div class="t" style="left:221.8px;top:112.0px;font-size:12.40px;line-height:12.40px;color:#252423;transform-origin:0 50%;transform:scaleX(0.9619);">Libro de</div><div class="t" style="left:230.6px;top:128.0px;font-size:12.40px;line-height:12.40px;color:#252423;transform-origin:0 50%;transform:scaleX(0.8476);">Excel</div><div class="t" style="left:269.3px;top:112.0px;font-size:12.40px;line-height:12.40px;color:#252423;transform-origin:0 50%;transform:scaleX(0.9548);">Centro de datos de</div><div class="t" style="left:290.9px;top:128.0px;font-size:12.40px;line-height:12.40px;color:#252423;transform-origin:0 50%;transform:scaleX(0.9062);">OneLake</div><svg class="r" style="left:337.5px;top:132.7px;" width="8" height="5.0" viewBox="0 0 8 5.0"><polyline points="1,1 4.0,4.0 7,1" fill="none" stroke="#3a3938" stroke-width="1.2"/></svg><div class="t" style="left:382.0px;top:112.0px;font-size:12.40px;line-height:12.40px;color:#252423;transform-origin:0 50%;transform:scaleX(0.8383);">SQL</div><div class="t" style="left:376.4px;top:128.0px;font-size:12.40px;line-height:12.40px;color:#252423;transform-origin:0 50%;transform:scaleX(0.8927);">Server</div><div class="t" style="left:415.0px;top:112.0px;font-size:12.40px;line-height:12.40px;color:#252423;transform-origin:0 50%;transform:scaleX(0.9790);">Introducir</div><div class="t" style="left:425.6px;top:128.0px;font-size:12.40px;line-height:12.40px;color:#252423;transform-origin:0 50%;transform:scaleX(0.9528);">datos</div><div class="t" style="left:470.7px;top:112.0px;font-size:12.40px;line-height:12.40px;color:#252423;transform-origin:0 50%;transform:scaleX(0.9060);">Dataverse</div><div class="t" style="left:532.5px;top:112.0px;font-size:12.40px;line-height:12.40px;color:#252423;transform-origin:0 50%;transform:scaleX(0.9235);">Orígenes</div><div class="t" style="left:526.6px;top:128.0px;font-size:12.40px;line-height:12.40px;color:#252423;transform-origin:0 50%;transform:scaleX(0.9521);">recientes</div><svg class="r" style="left:575.0px;top:132.7px;" width="8" height="5.0" viewBox="0 0 8 5.0"><polyline points="1,1 4.0,4.0 7,1" fill="none" stroke="#3a3938" stroke-width="1.2"/></svg><div class="t" style="left:367.3px;top:149.2px;font-size:10.30px;line-height:10.30px;color:#252423;transform-origin:0 50%;transform:scaleX(0.9292);">Datos</div><div class="t" style="left:607.0px;top:112.0px;font-size:12.40px;line-height:12.40px;color:#252423;transform-origin:0 50%;transform:scaleX(0.9291);">Transformar</div><div class="t" style="left:617.7px;top:128.0px;font-size:12.40px;line-height:12.40px;color:#252423;transform-origin:0 50%;transform:scaleX(0.9495);">datos</div><svg class="r" style="left:647.5px;top:132.7px;" width="8" height="5.0" viewBox="0 0 8 5.0"><polyline points="1,1 4.0,4.0 7,1" fill="none" stroke="#3a3938" stroke-width="1.2"/></svg><div class="t" style="left:674.6px;top:112.0px;font-size:12.40px;line-height:12.40px;color:#252423;transform-origin:0 50%;transform:scaleX(0.9331);">Actualizar</div><div class="t" style="left:645.2px;top:149.2px;font-size:10.30px;line-height:10.30px;color:#252423;transform-origin:0 50%;transform:scaleX(0.9170);">Consultas</div><div class="t" style="left:746.8px;top:112.0px;font-size:12.40px;line-height:12.40px;color:#252423;transform-origin:0 50%;transform:scaleX(0.9881);">Nuevo objeto</div><div class="t" style="left:768.2px;top:128.0px;font-size:12.40px;line-height:12.40px;color:#252423;transform-origin:0 50%;transform:scaleX(0.9179);">visual</div><div class="t" style="left:822.7px;top:112.0px;font-size:12.40px;line-height:12.40px;color:#252423;transform-origin:0 50%;transform:scaleX(0.9499);">Cuadro de</div><div class="t" style="left:836.9px;top:128.0px;font-size:12.40px;line-height:12.40px;color:#252423;transform-origin:0 50%;transform:scaleX(0.9933);">texto</div><div class="t" style="left:882.3px;top:112.0px;font-size:12.40px;line-height:12.40px;color:#252423;transform-origin:0 50%;transform:scaleX(0.9708);">Más objetos</div><div class="t" style="left:888.4px;top:128.0px;font-size:12.40px;line-height:12.40px;color:#252423;transform-origin:0 50%;transform:scaleX(0.9175);">visuales</div><svg class="r" style="left:930.0px;top:132.7px;" width="8" height="5.0" viewBox="0 0 8 5.0"><polyline points="1,1 4.0,4.0 7,1" fill="none" stroke="#3a3938" stroke-width="1.2"/></svg><div class="t" style="left:830.2px;top:149.2px;font-size:10.30px;line-height:10.30px;color:#252423;transform-origin:0 50%;transform:scaleX(0.9566);">Insertar</div><div class="t" style="left:971.5px;top:112.0px;font-size:12.40px;line-height:12.40px;color:#252423;transform-origin:0 50%;transform:scaleX(0.9235);">Nueva</div><div class="t" style="left:968.5px;top:128.0px;font-size:12.40px;line-height:12.40px;color:#252423;transform-origin:0 50%;transform:scaleX(0.9615);">medida</div><div class="t" style="left:1012.0px;top:112.0px;font-size:12.40px;line-height:12.40px;color:#252423;transform-origin:0 50%;transform:scaleX(0.9812);">Medida</div><div class="t" style="left:1015.0px;top:128.0px;font-size:12.40px;line-height:12.40px;color:#252423;transform-origin:0 50%;transform:scaleX(0.9662);">rápida</div><div class="t" style="left:991.7px;top:149.2px;font-size:10.30px;line-height:10.30px;color:#252423;transform-origin:0 50%;transform:scaleX(0.9215);">Cálculos</div><div class="t" style="left:1073.0px;top:112.0px;font-size:12.40px;line-height:12.40px;color:#c8c6c4;transform-origin:0 50%;transform:scaleX(0.9642);">Confidencialidad</div><svg class="r" style="left:1112.5px;top:131.2px;" width="8" height="5.0" viewBox="0 0 8 5.0"><polyline points="1,1 4.0,4.0 7,1" fill="none" stroke="#c8c6c4" stroke-width="1.2"/></svg><div class="t" style="left:1080.8px;top:149.2px;font-size:10.30px;line-height:10.30px;color:#252423;transform-origin:0 50%;transform:scaleX(0.9638);">Confidencialidad</div><div class="t" style="left:1183.0px;top:112.0px;font-size:12.40px;line-height:12.40px;color:#252423;transform-origin:0 50%;transform:scaleX(0.9353);">Publicar</div><div class="t" style="left:1182.0px;top:149.2px;font-size:10.30px;line-height:10.30px;color:#252423;transform-origin:0 50%;transform:scaleX(0.9688);">Compartir</div><div class="t" style="left:1246.2px;top:112.0px;font-size:12.40px;line-height:12.40px;color:#252423;transform-origin:0 50%;transform:scaleX(0.9742);">Copilot</div><div class="t" style="left:1249.0px;top:149.2px;font-size:10.30px;line-height:10.30px;color:#252423;transform-origin:0 50%;transform:scaleX(0.9919);">Copilot</div><div class="r" style="left:162px;top:70px;width:1px;height:87px;background:#e1dfdd;"></div><div class="r" style="left:596px;top:70px;width:1px;height:87px;background:#e1dfdd;"></div><div class="r" style="left:735px;top:70px;width:1px;height:87px;background:#e1dfdd;"></div><div class="r" style="left:958px;top:70px;width:1px;height:87px;background:#e1dfdd;"></div><div class="r" style="left:1062px;top:70px;width:1px;height:87px;background:#e1dfdd;"></div><div class="r" style="left:1172px;top:70px;width:1px;height:87px;background:#e1dfdd;"></div><div class="r" style="left:1235px;top:70px;width:1px;height:87px;background:#e1dfdd;"></div><div class="r" style="left:1294px;top:70px;width:1px;height:87px;background:#e1dfdd;"></div><svg class="r" style="left:1350px;top:146px;" width="13" height="9" viewBox="0 0 13 9"><polyline points="1.5,7 6.5,2 11.5,7" fill="none" stroke="#252423" stroke-width="1.6"/></svg><div class="r" style="left:0px;top:159px;width:1366px;height:1px;background:#e6e6e6;"></div>
<svg class="r" style="left:15px;top:75px;" width="32" height="34" viewBox="0 0 32 34"><path d="M2.5 6.5h4M14.5 6.5h4v22h-16v-22" fill="none" stroke="#eedfc3" stroke-width="1.3"/><rect x="2" y="6" width="17" height="23" fill="#fbf4e6" stroke="#ead6b0" stroke-width="1.2"/><path d="M7 9.5v-4h2.5a2 2 0 0 1 4 0h2.5v4z" fill="#fafafa" stroke="#cfcdcb" stroke-width="1.1"/><rect x="15.5" y="14.5" width="13.5" height="17" fill="#fafafa" stroke="#b3b1af" stroke-width="1.2"/></svg><svg class="r" style="left:53px;top:73px;" width="14" height="18" viewBox="0 0 14 18"><path d="M3 1l6 11M11 1l-6 11" stroke="#a7a5a3" stroke-width="1.1"/><circle cx="4" cy="14" r="2.3" fill="none" stroke="#a9c3dd" stroke-width="1.2"/><circle cx="10" cy="14" r="2.3" fill="none" stroke="#a9c3dd" stroke-width="1.2"/></svg><svg class="r" style="left:51px;top:97px;" width="18" height="18" viewBox="0 0 18 18"><path d="M7.5 3.5v-2h-6v12h3" fill="none" stroke="#aaa8a6" stroke-width="1.1"/><path d="M5.5 4.5h6l4 4v8h-10z" fill="#fafafa" stroke="#aaa8a6" stroke-width="1.1"/><path d="M8 10.5h5M8 13h5" stroke="#c0bebc" stroke-width="1"/></svg><svg class="r" style="left:51px;top:120px;" width="18" height="18" viewBox="0 0 18 18"><path d="M9 8l6-6 1.5 1.5-6 6" fill="none" stroke="#a8a6a4" stroke-width="1.2"/><path d="M2 13c2-1 5-5 6.5-5l2 2c0 2-4 5-5 7z" fill="#f2ddc2" stroke="#e3c7a0" stroke-width="1"/></svg><svg class="r" style="left:182px;top:75px;" width="32" height="34" viewBox="0 0 32 34"><path d="M2.5 6.5v19c0 2.5 4 4 8.5 4" fill="none" stroke="#323130" stroke-width="1.3"/><path d="M22.5 6.5v9" fill="none" stroke="#323130" stroke-width="1.3"/><ellipse cx="12.5" cy="6.5" rx="10" ry="4" fill="#fafafa" stroke="#323130" stroke-width="1.3"/><rect x="13.5" y="16.5" width="15" height="15" fill="#fafafa" stroke="#323130" stroke-width="1.3"/><rect x="13.5" y="16.5" width="15" height="2.5" fill="#605e5c"/><path d="M13.5 23.5h15M13.5 27.5h15M18.5 19v12.5M23.5 19v12.5" stroke="#323130" stroke-width="1"/></svg><svg class="r" style="left:231px;top:75px;" width="32" height="34" viewBox="0 0 32 34"><path d="M2.5 2.5h13l7 7v19h-20z" fill="#fafafa" stroke="#605e5c" stroke-width="1.2"/><path d="M15.5 2.5v7h7" fill="none" stroke="#605e5c" stroke-width="1.2"/><rect x="14" y="18" width="14" height="14" fill="#1d7446"/><path d="M17.5 21.5l7 7M24.5 21.5l-7 7" stroke="#fff" stroke-width="1.8"/></svg><svg class="r" style="left:303px;top:75px;" width="32" height="32" viewBox="0 0 32 32"><circle cx="15.8" cy="15.8" r="13.3" fill="#fafafa" stroke="#323130" stroke-width="1.4"/><path d="M22.7 6.6C20 1.5 13 1 10 5.5C5 8 2.4 13 2.6 17C2.8 20 4.5 22.5 8.9 23.7C8.5 20 8.5 15 9 13.3C9.5 10 11 8 15.8 6.9C18.5 6.5 21 6.5 22.7 6.6Z" fill="#323130"/><path d="M11.4 9.4C12.5 13 15 18 18.8 20.8C21 19.5 24 18 27.7 18.3M6.4 24C10 25 15 24 18.8 20.8" fill="none" stroke="#323130" stroke-width="1.3"/></svg><svg class="r" style="left:379px;top:75px;" width="32" height="34" viewBox="0 0 32 34"><path d="M2.5 2.5h12l6 6v20h-18z" fill="#fafafa" stroke="#323130" stroke-width="1.2"/><path d="M14.5 2.5v6h6" fill="none" stroke="#323130" stroke-width="1.2"/><path d="M15.5 15.5v13c0 2 3 3 6 3s6-1 6-3v-13z" fill="#fdf3e6" stroke="#e0a36a" stroke-width="1.2"/><ellipse cx="21.5" cy="15.5" rx="6" ry="2.5" fill="#fdf3e6" stroke="#e0a36a" stroke-width="1.2"/></svg><svg class="r" style="left:422px;top:73px;" width="34" height="34" viewBox="0 0 34 34"><rect x="2.5" y="3.5" width="28" height="27" fill="#fafafa" stroke="#323130" stroke-width="1.2"/><rect x="12" y="3" width="19" height="3" fill="#b9b7b5"/><path d="M2.5 13.5h28M2.5 22h28M11.5 13.5v17M21 6v24.5" stroke="#323130" stroke-width="1.1"/><path d="M8 0.5v12M1 6.5h13" stroke="#3e9a5c" stroke-width="1.6"/></svg><svg class="r" style="left:476px;top:74px;" width="40" height="34" viewBox="0 0 40 34"><g fill="none" stroke="#323130" stroke-width="1.25"><circle cx="19.9" cy="17" r="4.4"/><path d="M14.6 24.8C12.5 27.5 9 27.5 7.5 24.5C5.5 21 5.8 15 8.5 11C11 7.5 15 6 18.5 6.2C22 6.4 25.5 9 26.8 12.5C27.8 15.5 27 19 24.5 21C23.5 21.5 22.8 21.5 22 21.3"/><path d="M24.8 8.8C26 6.5 29 5.5 31.5 7C33.8 8.5 34 12.5 33.4 15.5C32.5 21 28 26 22.5 27.3C17.5 28.3 13.5 25 12.6 20.5C12 16 15 11.5 19.9 11.4"/></g></svg><svg class="r" style="left:543px;top:75px;" width="32" height="34" viewBox="0 0 32 34"><path d="M2.5 2.5h12l6 6v20h-18z" fill="#fafafa" stroke="#323130" stroke-width="1.2"/><path d="M14.5 2.5v6h6" fill="none" stroke="#323130" stroke-width="1.2"/><circle cx="21.5" cy="23.5" r="6.5" fill="#fafafa" stroke="#4a8fc9" stroke-width="1.3"/><path d="M21.5 19.5v4.5h3" fill="none" stroke="#323130" stroke-width="1.2"/></svg><svg class="r" style="left:622px;top:75px;" width="34" height="34" viewBox="0 0 34 34"><rect x="2.5" y="3.5" width="26" height="24" fill="#fafafa" stroke="#323130" stroke-width="1.2"/><rect x="3" y="4" width="25" height="3.5" fill="#c8c6c4"/><path d="M2.5 7.5h26M2.5 14.5h26M2.5 21h26M10.5 7.5v20M18.5 7.5v20" stroke="#323130" stroke-width="1"/><path d="M10.5 32l1.5-6.5 13.5-13.5 5 5-13.5 13.5z" fill="#eef5fc" stroke="#4a8fd6" stroke-width="1.3" stroke-linejoin="round"/><path d="M10.5 32l1.5-6.5 5 5z" fill="#4a8fd6"/><path d="M23.5 14l5 5" stroke="#4a8fd6" stroke-width="1.1"/></svg><svg class="r" style="left:687px;top:75px;" width="32" height="34" viewBox="0 0 32 34"><path d="M2.5 2.5h12l6 6v20h-18z" fill="#fafafa" stroke="#323130" stroke-width="1.2"/><path d="M14.5 2.5v6h6" fill="none" stroke="#323130" stroke-width="1.2"/><circle cx="20" cy="24" r="7.5" fill="#fafafa"/><path d="M14 22a6.5 6.5 0 0 1 11.5-2.5M26 26a6.5 6.5 0 0 1-11.5 2.5" fill="none" stroke="#3f9a61" stroke-width="1.5"/><path d="M26 16.5v4h-4M14 31.5v-4h4" fill="none" stroke="#3f9a61" stroke-width="1.5"/></svg><svg class="r" style="left:768px;top:75px;" width="34" height="34" viewBox="0 0 34 34"><rect x="2.5" y="12.5" width="7" height="18" fill="#6aa9e4" stroke="#2f6eb3" stroke-width="1"/><rect x="9.5" y="2.5" width="8" height="28" fill="#fafafa" stroke="#323130" stroke-width="1.2"/><rect x="17.5" y="7.5" width="7" height="23" fill="#c8c6c4" stroke="#605e5c" stroke-width="1"/><path d="M22 18v14M15 25h14" stroke="#3f9a61" stroke-width="1.6"/></svg><svg class="r" style="left:833px;top:76px;" width="36" height="30" viewBox="0 0 36 30"><rect x="3" y="3" width="29" height="23" fill="#fafafa" stroke="#323130" stroke-width="1.2"/><circle cx="3" cy="3" r="1.8" fill="#2f6eb3"/><circle cx="32" cy="3" r="1.8" fill="#2f6eb3"/><circle cx="3" cy="26" r="1.8" fill="#2f6eb3"/><circle cx="32" cy="26" r="1.8" fill="#2f6eb3"/><path d="M12.5 21l5-14 5 14M14.5 16h6" fill="none" stroke="#2f7fc6" stroke-width="1.4"/></svg><svg class="r" style="left:900px;top:75px;" width="34" height="34" viewBox="0 0 34 34"><rect x="2.5" y="12.5" width="7" height="18" fill="#fafafa" stroke="#323130" stroke-width="1.1"/><rect x="9.5" y="2.5" width="8" height="28" fill="#fafafa" stroke="#323130" stroke-width="1.2"/><rect x="17.5" y="7.5" width="7" height="23" fill="#fafafa" stroke="#323130" stroke-width="1.1"/><path d="M11 32l2-6 13-13 4 4-13 13z" fill="#9cc3ea" stroke="#2f6eb3" stroke-width="1.2"/></svg><svg class="r" style="left:976px;top:74px;" width="24" height="34" viewBox="0 0 24 34"><rect x="2.5" y="3.5" width="18.5" height="27.5" fill="#fafafa" stroke="#323130" stroke-width="1.3"/><rect x="5.2" y="6.5" width="13" height="3.8" fill="#5b9bd5" stroke="#3a78b5" stroke-width="0.6"/><rect x="5.4" y="14.0" width="2.9" height="2.9" fill="#323130"/><rect x="10.1" y="14.0" width="2.9" height="2.9" fill="#323130"/><rect x="14.8" y="14.0" width="2.9" height="2.9" fill="#323130"/><rect x="5.4" y="19.2" width="2.9" height="2.9" fill="#323130"/><rect x="10.1" y="19.2" width="2.9" height="2.9" fill="#323130"/><rect x="14.8" y="19.2" width="2.9" height="2.9" fill="#323130"/><rect x="5.4" y="24.4" width="2.9" height="2.9" fill="#323130"/><rect x="10.1" y="24.4" width="2.9" height="2.9" fill="#323130"/><rect x="14.8" y="24.4" width="2.9" height="2.9" fill="#323130"/></svg><svg class="r" style="left:1013px;top:72px;" width="32" height="36" viewBox="0 0 32 36"><rect x="10.5" y="5.5" width="18.5" height="27.5" fill="#fafafa" stroke="#323130" stroke-width="1.3"/><rect x="13.2" y="8.5" width="13" height="3.8" fill="#c8c6c4"/><rect x="13.4" y="16.0" width="2.9" height="2.9" fill="#323130"/><rect x="18.1" y="16.0" width="2.9" height="2.9" fill="#323130"/><rect x="22.8" y="16.0" width="2.9" height="2.9" fill="#323130"/><rect x="13.4" y="21.2" width="2.9" height="2.9" fill="#323130"/><rect x="18.1" y="21.2" width="2.9" height="2.9" fill="#323130"/><rect x="22.8" y="21.2" width="2.9" height="2.9" fill="#323130"/><rect x="13.4" y="26.4" width="2.9" height="2.9" fill="#323130"/><rect x="18.1" y="26.4" width="2.9" height="2.9" fill="#323130"/><rect x="22.8" y="26.4" width="2.9" height="2.9" fill="#323130"/><path d="M11.5 1.5L3 13.5h5.5L3.5 24 15 10.5H9.5l4.5-9z" fill="#f6b73c" stroke="#d88a14" stroke-width="0.9" stroke-linejoin="round"/></svg><svg class="r" style="left:1104px;top:75px;" width="32" height="32" viewBox="0 0 32 32"><path d="M10 2.1H2.1V29.3H22.6V17" fill="none" stroke="#b9c8d4" stroke-width="1.2"/><g transform="translate(17.5 10.5) rotate(-54)"><rect x="-11" y="-3.5" width="8.5" height="7" rx="1.2" fill="#f1f6fa" stroke="#b9c8d4" stroke-width="1.2"/><rect x="-9" y="-1.5" width="4.5" height="3" fill="none" stroke="#b9c8d4" stroke-width="1"/><rect x="-2.5" y="-4.5" width="8" height="9" fill="#e3edf4" stroke="#b9c8d4" stroke-width="1.4"/><rect x="5.5" y="-3" width="5" height="6" fill="#f1f6fa" stroke="#b9c8d4" stroke-width="1.2"/></g></svg><svg class="r" style="left:1191px;top:75px;" width="32" height="34" viewBox="0 0 32 34"><g fill="#fafafa" stroke="#323130" stroke-width="1.25" stroke-linejoin="round"><path d="M12.7 14V5.1Q12.7 2.1 15.7 2.1H20Q23 2.1 23 5.1V14"/><path d="M8 29.3V13.2Q8 10.2 11 10.2H15Q18 10.2 18 13.2V29.3"/><path d="M2.7 29.3V21.3Q2.7 18.3 5.7 18.3H9.7Q12.7 18.3 12.7 21.3V29.3Z"/><path d="M2.7 29.3H19" fill="none"/></g><path d="M22.4 16V31.7M16.5 22.6L22.4 16.2L28.9 22.6" fill="none" stroke="#3f7fa8" stroke-width="1.4"/></svg><svg class="r" style="left:1248px;top:76px;" width="34" height="30" viewBox="0 0 34 30"><g transform="translate(1,1)"><path d="M16 0.6H22Q24.2 0.6 26 7H15z" fill="#74bf93" stroke="#2f7a4c" stroke-width="1.2" stroke-linejoin="round"/><path d="M5.8 19.5H13L10.8 27.2H9Q7 27.2 5.8 19.5z" fill="#74bf93" stroke="#2f7a4c" stroke-width="1.2" stroke-linejoin="round"/><path d="M6.8 0.6H18L12.4 20.3H2.6Q0.3 20.3 0.7 17L2.9 6Q4 0.6 6.8 0.6z" fill="#fbfdfb" stroke="#2f7a4c" stroke-width="1.3" stroke-linejoin="round"/><path d="M19 7H29.5Q32.3 7 31.6 10.2L26.6 25Q25.8 27.2 23.5 27.2H13.8z" fill="#fbfdfb" stroke="#2f7a4c" stroke-width="1.3" stroke-linejoin="round"/></g></svg>
<div class="t" style="left:23.4px;top:43.6px;font-size:14.70px;line-height:14.70px;color:#3a3938;transform-origin:0 50%;transform:scaleX(0.9303);">Archivo</div><div class="t" style="left:107.6px;top:43.6px;font-size:14.70px;line-height:14.70px;color:#3a3938;transform-origin:0 50%;transform:scaleX(0.9908);">Inicio</div><div class="t" style="left:173.0px;top:43.6px;font-size:14.70px;line-height:14.70px;color:#3a3938;transform-origin:0 50%;transform:scaleX(0.9231);">Insertar</div><div class="t" style="left:252.0px;top:43.6px;font-size:14.70px;line-height:14.70px;color:#3a3938;transform-origin:0 50%;transform:scaleX(0.9604);">Modelado</div><div class="t" style="left:346.0px;top:43.6px;font-size:14.70px;line-height:14.70px;color:#3a3938;transform-origin:0 50%;transform:scaleX(0.8838);">Ver</div><div class="t" style="left:397.5px;top:43.6px;font-size:14.70px;line-height:14.70px;color:#3a3938;transform-origin:0 50%;transform:scaleX(0.9541);">Optimizar</div><div class="t" style="left:490.0px;top:43.6px;font-size:14.70px;line-height:14.70px;color:#3a3938;transform-origin:0 50%;transform:scaleX(0.9176);">Ayuda</div><div class="r" style="left:107px;top:62px;width:35px;height:3px;background:#117865;border-radius:1px"></div><div class="r" style="left:1253px;top:38px;width:107px;height:24px;background:#117865;border-radius:3px"></div><svg class="r" style="left:1258px;top:42px;" width="18" height="16" viewBox="0 0 18 16"><path d="M2.5 6.5v7h12v-3" fill="none" stroke="#fff" stroke-width="1.2"/><path d="M5.5 11 C6 6.5, 9 5, 13 5" fill="none" stroke="#fff" stroke-width="1.2"/><path d="M10.5 2l3.5 3-3.5 3" fill="none" stroke="#fff" stroke-width="1.2"/></svg><div class="t" style="left:1283.5px;top:44.0px;font-size:13.04px;line-height:13.04px;color:#ffffff;transform-origin:0 50%;transform:scaleX(0.9434);">Compartir</div><svg class="r" style="left:1340px;top:46px;" width="10" height="7" viewBox="0 0 10 7"><polyline points="1,1 5,5 9,1" fill="none" stroke="#fff" stroke-width="1.3"/></svg>
<div class="r" style="left:0px;top:668px;width:1366px;height:36px;background:#f3f2f1;"></div><div class="r" style="left:1296px;top:668px;width:1px;height:35px;background:#e1dfdd;"></div><div class="r" style="left:1331px;top:668px;width:1px;height:35px;background:#e1dfdd;"></div><div class="r" style="left:0px;top:703px;width:1366px;height:1px;background:#e1dfdd;"></div><div class="r" style="left:40px;top:668px;width:1px;height:35px;background:#e1dfdd;"></div><svg class="r" style="left:51px;top:674px;" width="24" height="18" viewBox="0 0 24 18"><rect x="2" y="1.5" width="19" height="11" fill="none" stroke="#323130" stroke-width="1.2"/><path d="M11.5 12.5v3M7 15.5h9" stroke="#323130" stroke-width="1.2"/></svg><div class="r" style="left:51px;top:696px;width:24px;height:3px;background:#117865;border-radius:2px"></div><svg class="r" style="left:99px;top:672px;" width="16" height="22" viewBox="0 0 16 22"><rect x="1.5" y="1.5" width="12" height="19" rx="1.5" fill="none" stroke="#323130" stroke-width="1.1"/><path d="M6.5 17.5h2" stroke="#323130" stroke-width="1.1"/></svg><svg class="r" style="left:133px;top:681px;" width="8" height="10" viewBox="0 0 8 10"><path d="M6 1L1 5l5 4z" fill="#c8c6c4"/></svg><svg class="r" style="left:156px;top:681px;" width="8" height="10" viewBox="0 0 8 10"><path d="M2 1l5 4-5 4z" fill="#c8c6c4"/></svg><div class="r" style="left:168px;top:668px;width:87px;height:35px;background:#ffffff;border-left:1px solid #e1dfdd;box-sizing:border-box"></div><div class="r" style="left:168px;top:699px;width:87px;height:4px;background:#117865;"></div><div class="t" style="left:189.5px;top:681.1px;font-size:11.82px;line-height:11.82px;color:#252423;transform-origin:0 50%;transform:scaleX(0.9434);-webkit-text-stroke:0.4px #252423;">Página 1</div><div class="r" style="left:255px;top:668px;width:39px;height:35px;background:#117865;"></div><div class="r" style="left:269px;top:685px;width:11px;height:2.6px;background:#ffffff;"></div><div class="r" style="left:273.2px;top:680.8px;width:2.6px;height:11px;background:#ffffff;"></div><div class="r" style="left:0px;top:704px;width:1366px;height:23px;background:#f3f2f1;"></div><div class="t" style="left:5.0px;top:710.6px;font-size:12.02px;line-height:12.02px;color:#605e5c;transform-origin:0 50%;transform:scaleX(0.9434);">Página 1 de 1</div>
<div class="r" style="left:1154px;top:715px;width:5px;height:2px;background:#323130;"></div><div class="r" style="left:1163px;top:715px;width:100px;height:1px;background:#605e5c;"></div><div class="r" style="left:1208px;top:710px;width:4px;height:10px;background:#605e5c;"></div><div class="r" style="left:1213px;top:712px;width:1px;height:6px;background:#605e5c;"></div><div class="r" style="left:1268px;top:715px;width:9px;height:1.2px;background:#605e5c;"></div><div class="r" style="left:1272px;top:711px;width:1.2px;height:9px;background:#605e5c;"></div><div class="t" style="left:1290.5px;top:710.1px;font-size:11.77px;line-height:11.77px;color:#605e5c;transform-origin:0 50%;transform:scaleX(0.9434);">93 %</div><svg class="r" style="left:1331px;top:709px;" width="19" height="14" viewBox="0 0 19 14"><path d="M1.5 5v-3.5h4M13.5 1.5h4v3.5M17.5 9v3.5h-4M5.5 12.5h-4V9" fill="none" stroke="#323130" stroke-width="1.2"/></svg>
<div class="r" style="left:0px;top:727px;width:1366px;height:41px;background:#4a3c38;"></div><div class="r" style="left:0px;top:727px;width:1366px;height:1px;background:#1f1b1a;"></div><svg class="r" style="left:15px;top:739px;" width="18" height="18" viewBox="0 0 18 18"><path d="M1 3l6.5-1v6.5H1zM8.5 1.8L17 0.5v8H8.5zM1 9.5h6.5V16L1 15zM8.5 9.5H17v8l-8.5-1.2z" fill="#ffffff"/></svg><svg class="r" style="left:63px;top:736px;" width="24" height="24" viewBox="0 0 24 24"><path d="M12 1l10 5.8v11.4L12 24 2 18.2V6.8z" fill="#2fc66a" stroke="#0c5e2a" stroke-width="1.2"/><path d="M9 6.5v11M9 13l5-4M10.5 12l4 5.5" fill="none" stroke="#083d1a" stroke-width="2"/></svg><svg class="r" style="left:112px;top:736px;" width="24" height="24" viewBox="0 0 24 24"><circle cx="12" cy="12" r="11.5" fill="#f4f1f1"/><rect x="9" y="5" width="2.6" height="6" rx="1.3" fill="#36c5f0"/><rect x="5" y="10" width="6" height="2.6" rx="1.3" fill="#36c5f0"/><rect x="13" y="5" width="2.6" height="6" rx="1.3" fill="#2eb67d"/><rect x="13" y="9" width="6" height="2.6" rx="1.3" fill="#2eb67d"/><rect x="13" y="13" width="2.6" height="6" rx="1.3" fill="#ecb22e"/><rect x="13" y="13" width="6" height="2.6" rx="1.3" fill="#ecb22e"/><rect x="9" y="13" width="2.6" height="6" rx="1.3" fill="#e01e5a"/><rect x="5" y="13" width="6" height="2.6" rx="1.3" fill="#e01e5a"/></svg><svg class="r" style="left:161px;top:736px;" width="24" height="24" viewBox="0 0 24 24"><circle cx="12" cy="12" r="11.5" fill="#1ed760"/><path d="M5.5 8.5c4-1.3 9-1 13 1M6.5 12c3.5-1 7.5-.7 10.5 1M7.5 15.3c3-.8 6-.5 8.3.8" fill="none" stroke="#121212" stroke-width="1.8" stroke-linecap="round"/></svg><svg class="r" style="left:210px;top:737px;" width="24" height="22" viewBox="0 0 24 22"><path d="M1 3h8l2 2h12v15H1z" fill="#f5c342"/><rect x="1" y="7" width="22" height="13" fill="#ffd866"/><path d="M8 20v-5h8v5" fill="none" stroke="#2f86d6" stroke-width="2.4"/></svg><svg class="r" style="left:259px;top:736px;" width="26" height="26" viewBox="0 0 26 26"><path d="M3 3.5l13-1.5 5 3.5v15l-14 1.5-4-3.5z" fill="#ffffff" stroke="#111" stroke-width="1.5"/><path d="M8 8v10M8 8l7 10M15 8v10" fill="none" stroke="#111" stroke-width="2"/><circle cx="19.5" cy="19" r="5" fill="#e0534a"/><text x="17.6" y="21.8" font-family="Liberation Sans" font-size="7.5" font-weight="bold" fill="#fff">1</text></svg><svg class="r" style="left:307px;top:735px;" width="26" height="26" viewBox="0 0 26 26"><rect x="2" y="2" width="19" height="19" rx="2" fill="#111" stroke="#eee" stroke-width="1.2"/><rect x="5" y="5" width="19" height="19" rx="2" fill="#fff" stroke="#111" stroke-width="1.5"/><rect x="5" y="5" width="19" height="4" fill="#111"/><text x="7.5" y="21" font-family="Liberation Sans" font-size="11" font-weight="bold" fill="#111">31</text></svg><svg class="r" style="left:355px;top:736px;" width="26" height="24" viewBox="0 0 26 24"><rect x="7" y="2" width="18" height="20" rx="2" fill="#41a5ee"/><rect x="7" y="8" width="18" height="7" fill="#2b7cd3"/><rect x="7" y="15" width="18" height="7" fill="#185abd"/><rect x="1" y="6" width="12" height="12" rx="1.5" fill="#185abd"/><path d="M3 9l1.8 6 1.6-5 1.6 5L9.8 9" fill="none" stroke="#fff" stroke-width="1.4"/></svg><svg class="r" style="left:404px;top:736px;" width="26" height="24" viewBox="0 0 26 24"><circle cx="15" cy="12" r="10.5" fill="#ed6c47"/><path d="M15 1.5a10.5 10.5 0 0 1 10.5 10.5H15z" fill="#ff8f6b"/><rect x="2" y="6" width="12" height="12" rx="1.5" fill="#c43e1c"/><path d="M6 16V8.5h2.5a2 2 0 0 1 0 4H6" fill="none" stroke="#fff" stroke-width="1.5"/></svg><svg class="r" style="left:453px;top:736px;" width="28" height="24" viewBox="0 0 28 24"><rect x="8" y="2" width="19" height="20" rx="2" fill="#21a366"/><rect x="8" y="2" width="9" height="10" fill="#33c481"/><rect x="8" y="12" width="19" height="10" fill="#107c41"/><rect x="1" y="6" width="12" height="12" rx="1.5" fill="#107c41"/><path d="M4 9l5 6M9 9l-5 6" stroke="#fff" stroke-width="1.5"/></svg><svg class="r" style="left:503px;top:735px;" width="26" height="26" viewBox="0 0 26 26"><ellipse cx="13" cy="13" rx="10.8" ry="11.3" fill="none" stroke="#c9243a" stroke-width="2"/><ellipse cx="13" cy="13" rx="5" ry="8.8" fill="none" stroke="#c9243a" stroke-width="1.6"/></svg><svg class="r" style="left:552px;top:736px;" width="26" height="24" viewBox="0 0 26 24"><path d="M18 1l6 3v16l-6 3-11-10 -4 3-2-1.5V9.5L3 8l4 3z" fill="#1f8ad2"/><path d="M18 6v12l-7-6z" fill="#463d3a"/></svg><svg class="r" style="left:601px;top:736px;" width="26" height="24" viewBox="0 0 26 24"><rect x="1" y="1" width="23" height="22" rx="3" fill="#2a5a86"/><path d="M4 4.5c3 0 6 3 8 7s2.5 6 4 8M5.5 6c0 2 1 3.5 2 5M11 11c1 2 1 4 0 5.5M15 13.5l-1.5 2.5 3 2" fill="none" stroke="#e8eef4" stroke-width="0.9"/><path d="M17.5 3.5l3 3M20 3l-2.5 3.5" stroke="#e8eef4" stroke-width="1.2"/></svg><svg class="r" style="left:650px;top:736px;" width="26" height="26" viewBox="0 0 26 26"><circle cx="12.5" cy="12.5" r="11.5" fill="#7a2aa8"/><circle cx="12.5" cy="12.5" r="8.2" fill="#f6ecfb"/><path d="M9.8 20.5v-3c-1.8-.5-3-1.8-3-4 0-.9.3-1.7.9-2.3-.2-.7 0-1.6.3-2.1.9 0 1.7.5 2.1.9a6.5 6.5 0 0 1 4.8 0c.4-.4 1.2-.9 2.1-.9.3.5.5 1.4.3 2.1.6.6.9 1.4.9 2.3 0 2.2-1.2 3.5-3 4v3z" fill="#7a2aa8"/></svg><svg class="r" style="left:699px;top:735px;" width="26" height="26" viewBox="0 0 26 26"><path d="M4 22l1.5-4.5A10 10 0 1 1 9 21z" fill="none" stroke="#25d366" stroke-width="2.5"/><path d="M9 8.5c0 3.5 3.5 7.5 7.5 8l1.5-1.8-2.5-1.5-1 1c-1.3-.5-3-2.2-3.5-3.5l1-1-1.3-2.6z" fill="#25d366"/></svg><div class="r" style="left:737px;top:727px;width:48px;height:41px;background:#615551;"></div><svg class="r" style="left:749px;top:736px;" width="22" height="24" viewBox="0 0 22 24"><rect x="12" y="1" width="7" height="21" rx="1" fill="#e8b120"/><rect x="7" y="6" width="7" height="16" rx="1" fill="#f2c811"/><rect x="2" y="11" width="7" height="11" rx="1" fill="#fde26f"/></svg><div class="r" style="left:104px;top:765px;width:40px;height:3px;background:#7fb6e3;"></div><div class="r" style="left:202px;top:765px;width:40px;height:3px;background:#7fb6e3;"></div><div class="r" style="left:251px;top:765px;width:40px;height:3px;background:#7fb6e3;"></div><div class="r" style="left:398px;top:765px;width:40px;height:3px;background:#7fb6e3;"></div><div class="r" style="left:496px;top:765px;width:39px;height:3px;background:#7fb6e3;"></div><div class="r" style="left:692px;top:765px;width:39px;height:3px;background:#7fb6e3;"></div><div class="r" style="left:737px;top:765px;width:48px;height:3px;background:#7fb6e3;"></div><svg class="r" style="left:1176px;top:743px;" width="15" height="10" viewBox="0 0 15 10"><polyline points="1.5,8 7.5,2 13.5,8" fill="none" stroke="#fff" stroke-width="1.3"/></svg><svg class="r" style="left:1200px;top:737px;" width="15" height="20" viewBox="0 0 15 20"><rect x="0.5" y="0.5" width="14" height="19" rx="6" fill="#1a7fe0"/><path d="M4 6.5l7 6-3.5 3V4.5l3.5 3-7 6" fill="none" stroke="#fff" stroke-width="1.1"/></svg><svg class="r" style="left:1222px;top:741px;" width="19" height="13" viewBox="0 0 19 13"><rect x="7.5" y="2.5" width="10" height="8" fill="none" stroke="#fff" stroke-width="1.2"/><rect x="9" y="4" width="7" height="5" fill="#fff"/><path d="M1 6.5h6M3.5 3.5v2M5.5 3.5v2" stroke="#fff" stroke-width="1.2"/></svg><svg class="r" style="left:1249px;top:741px;" width="16" height="16" viewBox="0 0 16 16"><path d="M1.5 14.5a13 13 0 0 1 13-13M4.5 14.5a10 10 0 0 1 10-10M7.5 14.5a7 7 0 0 1 7-7" fill="none" stroke="#fff" stroke-width="1.1"/><circle cx="13" cy="13" r="1.8" fill="#fff"/></svg><svg class="r" style="left:1270px;top:740px;" width="18" height="16" viewBox="0 0 18 16"><path d="M1.5 5.5h3l4-4v13l-4-4h-3z" fill="none" stroke="#fff" stroke-width="1.1"/><path d="M11 5a4 4 0 0 1 0 6M13.5 3a7 7 0 0 1 0 10" fill="none" stroke="#fff" stroke-width="1.1"/></svg><div class="t" style="left:1300.2px;top:733.7px;font-size:12.06px;line-height:12.06px;color:#ffffff;transform-origin:0 50%;transform:scaleX(0.9434);">6:54 p. m.</div><div class="t" style="left:1297.0px;top:750.5px;font-size:12.22px;line-height:12.22px;color:#ffffff;transform-origin:0 50%;transform:scaleX(0.9434);">23/07/2024</div><div class="r" style="left:1362px;top:728px;width:1px;height:40px;background:#8a817e;"></div><svg class="r" style="left:1110px;top:675px;" width="90" height="93" viewBox="0 0 90 93"><path d="M55 64 L77 41 L49 13 L17 47 L49 81 L70 60" fill="none" stroke="#8fae3c" stroke-width="8" stroke-linejoin="round" stroke-linecap="round" opacity="0.09"/></svg><svg class="r" style="left:1200px;top:695px;" width="95" height="35" viewBox="0 0 95 35"><path d="M5 32V6h10a8 8 0 0 1 0 16H5M32 4v28" fill="none" stroke="#888" stroke-width="5" opacity="0.06"/></svg>
</body></html>
